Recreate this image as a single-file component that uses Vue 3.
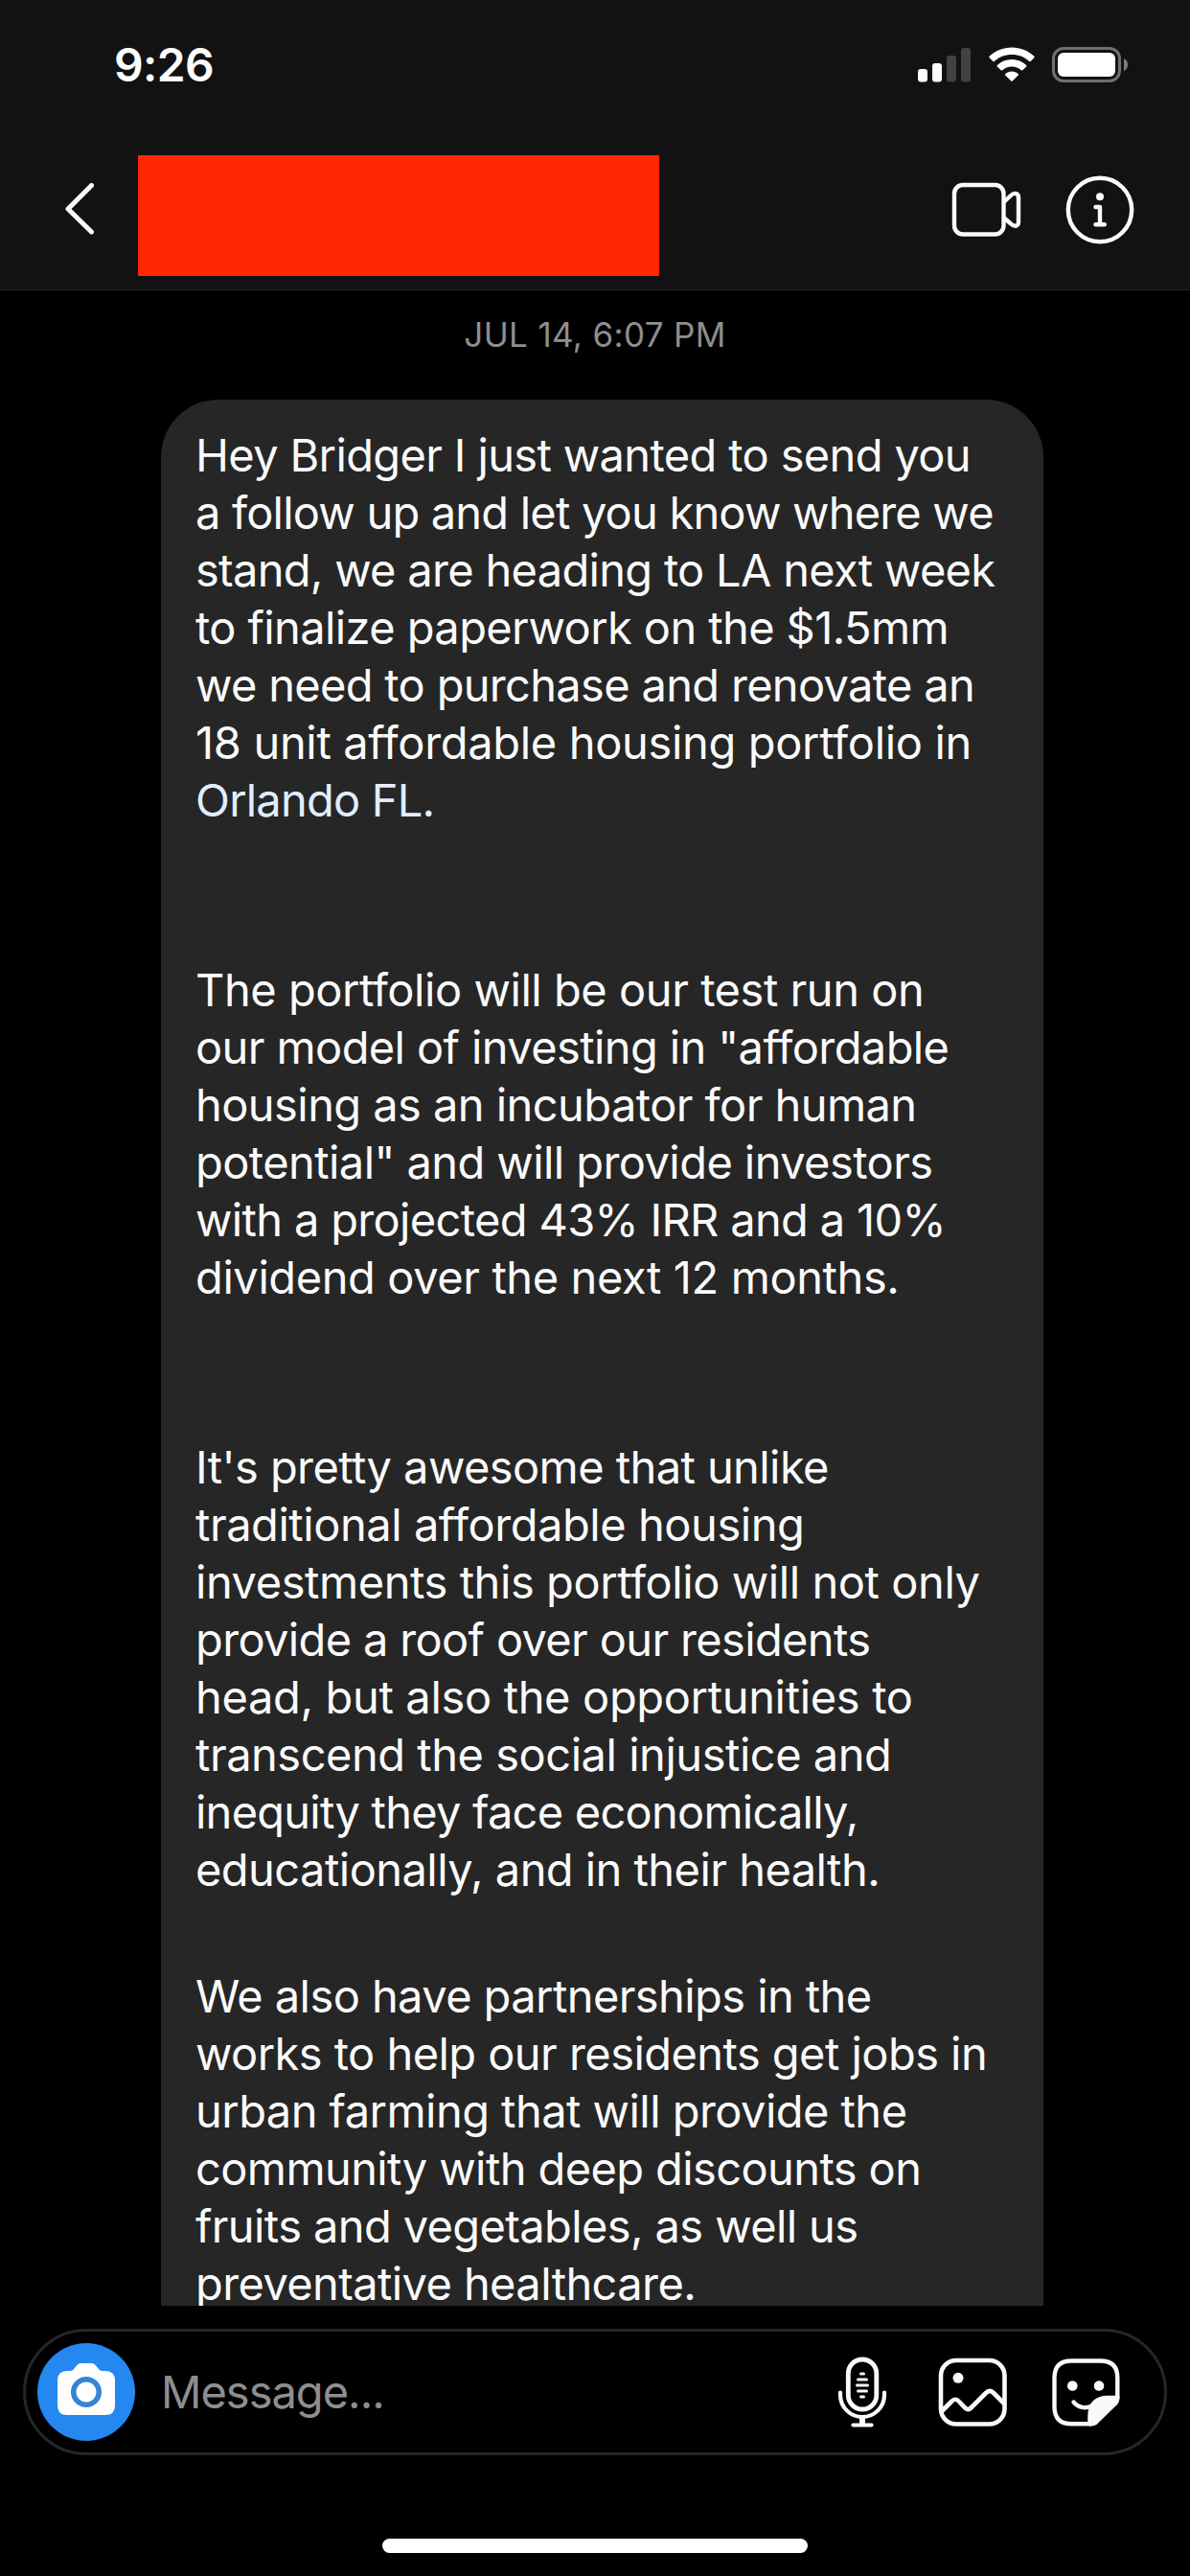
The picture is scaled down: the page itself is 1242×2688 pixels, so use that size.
<template>
  <div class="screen">
    <header class="top">
      <div class="status-bar">
        <span class="clock">{{ time }}</span>
        <div class="status-icons">
          <svg class="signal" width="56" height="36" viewBox="0 0 56 36" aria-hidden="true">
            <rect x="0" y="22" width="10" height="13.500" rx="3" fill="#fff" />
            <rect x="15" y="16" width="10" height="19.500" rx="3" fill="#fff" />
            <rect x="30" y="8" width="10" height="27.500" rx="3" fill="#424242" />
            <rect x="45" y="0" width="10" height="35.500" rx="3" fill="#424242" />
          </svg>
          <svg class="wifi" width="48" height="37" viewBox="0 0 48 37" fill="#fff" aria-hidden="true">
            <path d="M24 0.500C33 0.500 41.500 4 47.400 9.800Q48 10.500 47.400 11.200L43.600 15Q42.900 15.700 42.200 15C37.500 10.600 31 8 24 8S10.500 10.600 5.800 15Q5.100 15.700 4.400 15L0.600 11.200Q0 10.500 0.600 9.800C6.500 4 15 0.500 24 0.500Z" />
            <path d="M24 13C29.800 13 35.200 15.200 39.200 19Q39.900 19.700 39.200 20.400L35.300 24.200Q34.600 24.900 33.900 24.200C31.200 21.900 27.800 20.500 24 20.500S16.800 21.900 14.100 24.200Q13.400 24.900 12.700 24.200L8.800 20.400Q8.100 19.700 8.800 19C12.800 15.200 18.200 13 24 13Z" />
            <path d="M24 25.500C26.600 25.500 29 26.400 30.700 28Q31.500 28.700 30.800 29.400L24.700 35.500Q24 36.200 23.300 35.500L17.200 29.400Q16.500 28.700 17.300 28C19 26.400 21.400 25.500 24 25.500Z" />
          </svg>
          <svg width="80" height="38" viewBox="0 0 80 38" aria-hidden="true">
            <rect x="1.500" y="1.500" width="69" height="34" rx="10.500" fill="none" stroke="#6f6f6f" stroke-width="3" />
            <rect x="6" y="6" width="60" height="25" rx="6" fill="#fff" />
            <path d="M75 12C77.500 13 79 15.500 79 18.500S77.500 24 75 25Z" fill="#7d7d7d" />
          </svg>
        </div>
      </div>

      <nav class="nav-bar">
        <svg class="back" width="30" height="54" viewBox="0 0 30 54" fill="none" stroke="#fafafa" stroke-width="5" stroke-linecap="round" stroke-linejoin="round" aria-hidden="true">
          <path d="M27.500 2.500L3 27L27.500 51" />
        </svg>
        <div class="redacted"></div>
        <svg class="video" width="74" height="58" viewBox="0 0 74 58" fill="none" stroke="#fafafa" stroke-width="4.400" stroke-linejoin="round" aria-hidden="true">
          <rect x="3" y="3" width="51.500" height="51.500" rx="9" />
          <path d="M54.500 21L62 14Q64.500 11.500 67 12Q70 12.500 70 16V42Q70 45 67 45.800Q64.500 46 62 43.500L54.500 37" />
        </svg>
        <svg class="info" width="72" height="72" viewBox="0 0 72 72" fill="none" stroke="#fafafa" stroke-width="4.400" stroke-linecap="round" stroke-linejoin="round" aria-hidden="true">
          <circle cx="36" cy="36" r="33.200" />
          <circle cx="36" cy="22.300" r="4" fill="#fafafa" stroke="none" />
          <path d="M31.500 33H36V50.500M31.500 51.300H40.800" />
        </svg>
      </nav>
    </header>

    <main class="thread">
      <p class="timestamp">{{ timestamp }}</p>
      <div class="bubble">
        <p v-for="(lines, i) in paragraphs" :key="i" class="paragraph">
          <span
            v-for="line in lines"
            :key="line.text"
            :class="['line', { link: line.link }]"
            :style="{ letterSpacing: line.track + 'px' }"
          >{{ line.text }}</span>
        </p>
      </div>
    </main>

    <footer class="composer">
      <div class="camera">
        <svg width="60" height="54" viewBox="0 0 60 54" aria-hidden="true">
          <path d="M10 8H13C16 8 17 6 19 3.500C21 1 22 0 25 0H35C38 0 39 1 41 3.500C43 6 44 8 47 8H50Q60 8 60 18V44Q60 54 50 54H10Q0 54 0 44V18Q0 8 10 8Z" fill="#fff" />
          <circle cx="30" cy="30" r="13.300" fill="none" stroke="#3585d5" stroke-width="5.500" />
        </svg>
      </div>
      <span class="placeholder">Message...</span>
      <svg class="mic" width="52" height="74" viewBox="0 0 52 74" fill="none" stroke="#fafafa" stroke-width="4.200" stroke-linecap="round" aria-hidden="true">
        <rect x="11.300" y="3" width="29.500" height="52" rx="14.750" stroke-width="4.800" />
        <path d="M3 37.500V40C3 53 13.500 63 26 63S49 53 49 40V37.500" />
        <path d="M26 63V71" stroke-width="6" stroke-linecap="butt" />
        <path d="M16.500 71.500H35.500" />
        <path d="M24.500 18H27.500M21.500 24H30.500M20.500 30H31.500M21.500 36H30.500M24.500 42H27.500" stroke-width="3" />
      </svg>
      <svg class="gallery" width="72" height="72" viewBox="0 0 72 72" fill="none" stroke="#fafafa" stroke-width="4.600" stroke-linejoin="round" aria-hidden="true">
        <rect x="3" y="3" width="66.500" height="66.500" rx="16" />
        <circle cx="21" cy="21.300" r="5.500" fill="#fafafa" stroke="none" />
        <path d="M4 56L14 46Q18 41.500 22 46L28.500 52.800Q31.500 55.500 34.500 52.500L50 37Q54 33 58 37L69 48" />
      </svg>
      <svg width="71" height="71" viewBox="0 0 71 71" fill="none" stroke="#fafafa" stroke-width="4.400" stroke-linecap="round" stroke-linejoin="round" aria-hidden="true">
        <path d="M40 68.300H20Q2.500 68.300 2.500 50.500V20Q2.500 2.500 20 2.500H50.500Q68.300 2.500 68.300 20V41" />
        <path d="M39.500 68.300V60C39.500 46 48 41 58 41H68.300Q68.300 45 65.500 47.500L46 66.500Q44 68.300 39.500 68.300Z" fill="#fafafa" />
        <circle cx="21.300" cy="28.500" r="5.300" fill="#fafafa" stroke="none" />
        <circle cx="49" cy="28.500" r="5.300" fill="#fafafa" stroke="none" />
        <path d="M22.500 45.500C27 51.500 35 52.500 41 49.800" />
      </svg>
    </footer>

    <div class="home-indicator"></div>
  </div>
</template>

<script setup>
const time = '9:26'
const timestamp = 'JUL 14, 6:07 PM'

// track: letter spacing in px that sets the line to its measure
const paragraphs = [
  [
    { text: 'Hey Bridger I just wanted to send you', track: -0.64 },
    { text: 'a follow up and let you know where we', track: -0.8 },
    { text: 'stand, we are heading to LA next week', track: -0.7 },
    { text: 'to finalize paperwork on the $1.5mm', track: -0.6 },
    { text: 'we need to purchase and renovate an', track: -0.68 },
    { text: '18 unit affordable housing portfolio in', track: -0.33 },
    { text: 'Orlando FL.', track: -0.8, link: true },
  ],
  [
    { text: 'The portfolio will be our test run on', track: -0.45 },
    { text: 'our model of investing in "affordable', track: -0.6 },
    { text: 'housing as an incubator for human', track: -0.56 },
    { text: 'potential" and will provide investors', track: -0.57 },
    { text: 'with a projected 43% IRR and a 10%', track: -0.66 },
    { text: 'dividend over the next 12 months.', track: -0.4 },
  ],
  [
    { text: "It's pretty awesome that unlike", track: -0.58 },
    { text: 'traditional affordable housing', track: -0.45 },
    { text: 'investments this portfolio will not only', track: -0.43 },
    { text: 'provide a roof over our residents', track: -0.65 },
    { text: 'head, but also the opportunities to', track: -0.34 },
    { text: 'transcend the social injustice and', track: -0.47 },
    { text: 'inequity they face economically,', track: -0.76 },
    { text: 'educationally, and in their health.', track: -0.54 },
  ],
  [
    { text: 'We also have partnerships in the', track: -0.58 },
    { text: 'works to help our residents get jobs in', track: -0.55 },
    { text: 'urban farming that will provide the', track: -0.54 },
    { text: 'community with deep discounts on', track: -0.6 },
    { text: 'fruits and vegetables, as well us', track: -0.61 },
    { text: 'preventative healthcare.', track: -0.6 },
  ],
]
</script>

<style>
body {
  margin: 0;
  background: #000;
}
</style>

<style scoped>
.screen {
  display: flex;
  flex-direction: column;
  width: 1242px;
  height: 2688px;
  overflow: hidden;
  background: #000;
  color: #fafafa;
  font-family: Inter, 'Liberation Sans', sans-serif;
}

.screen svg {
  display: block;
  flex-shrink: 0;
}

.top {
  box-sizing: border-box;
  height: 303px;
  flex-shrink: 0;
  background: #121212;
  border-bottom: 1px solid #262626;
}

/* Status bar */
.status-bar {
  box-sizing: border-box;
  display: flex;
  justify-content: space-between;
  height: 162px;
  padding: 38px 64px 0 119px;
}

.clock {
  height: 60px;
  font-size: 48px;
  font-weight: 600;
  line-height: 60px;
  letter-spacing: -0.6px;
  color: #fff;
}

.status-icons {
  display: flex;
  align-items: flex-start;
  padding-top: 11px;
}

.signal {
  margin-top: 1px;
}

.wifi {
  margin: 0 18px;
}

/* Navigation */
.nav-bar {
  display: flex;
  align-items: flex-start;
  height: 126px;
  padding: 0 58px 0 68px;
}

.back {
  margin: 29px 46px 0 0;
}

.redacted {
  width: 544px;
  height: 126px;
  margin-right: auto;
  background: #ff2600;
}

.video {
  margin: 28px 45px 0 0;
}

.info {
  margin-top: 21px;
}

/* Conversation */
.thread {
  box-sizing: border-box;
  display: flex;
  flex-direction: column;
  height: 2103px;
  flex-shrink: 0;
  overflow: hidden;
}

.timestamp {
  flex-shrink: 0;
  margin: 24px 0 0;
  height: 90px;
  font-size: 35px;
  line-height: 44px;
  letter-spacing: 0.35px;
  text-align: center;
  color: #8e8e8e;
}

.bubble {
  box-sizing: border-box;
  width: 921px;
  flex: 1 0 auto;
  margin-left: 168px;
  padding: 28px 36px;
  border-radius: 60px 60px 0 0;
  background: #262626;
}

.paragraph {
  display: flex;
  flex-direction: column;
  align-items: flex-start;
  margin: 0 0 138px;
}

.paragraph:nth-last-child(2) {
  margin-bottom: 72px;
}

.paragraph:last-child {
  margin-bottom: 0;
}

.line {
  height: 60px;
  font-size: 47px;
  line-height: 60px;
  white-space: nowrap;
}

.link {
  color: #e0edff;
}

/* Message field */
.composer {
  box-sizing: border-box;
  display: flex;
  align-items: center;
  flex-shrink: 0;
  height: 132px;
  margin: 24px 24px 0;
  padding: 0 46px 0 12px;
  border: 3px solid #262626;
  border-radius: 66px;
}

.camera {
  display: flex;
  align-items: center;
  justify-content: center;
  width: 102px;
  height: 102px;
  margin-right: 27px;
  padding-bottom: 6px;
  box-sizing: border-box;
  border-radius: 50%;
  background: #2488f0;
}

.placeholder {
  margin-right: auto;
  font-size: 47px;
  line-height: 60px;
  letter-spacing: -1px;
  color: #8e8e8e;
}

.mic {
  margin-right: 53px;
}

.gallery {
  margin-right: 47px;
}

.home-indicator {
  width: 444px;
  height: 15px;
  flex-shrink: 0;
  margin: 87px auto 0;
  border-radius: 8px;
  background: #fff;
}
</style>
